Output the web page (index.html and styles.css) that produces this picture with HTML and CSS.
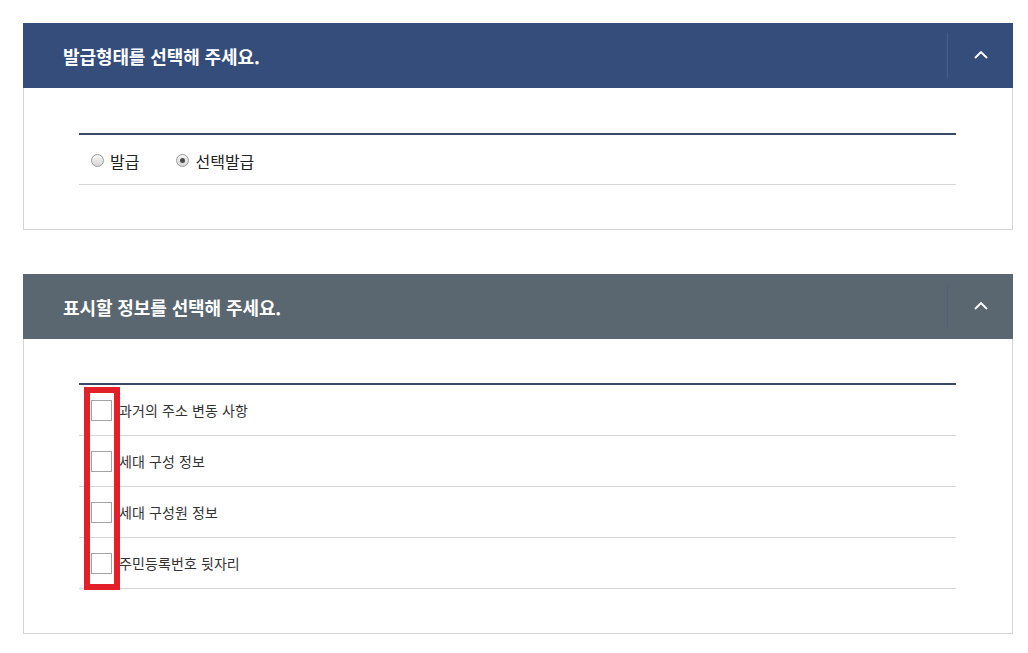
FILE: index.html
```html
<!DOCTYPE html>
<html lang="ko">
<head>
<meta charset="utf-8">
<title>발급형태 선택</title>
<link rel="stylesheet" href="styles.css">
</head>
<body>
<div class="wrap">
  <section class="panel">
    <div class="panel-head head-blue">
      <h2 class="panel-title">발급형태를 선택해 주세요.</h2>
      <button class="toggle" type="button" aria-label="접기">
        <svg width="14" height="8" viewBox="0 0 14 8"><polyline points="1,7 7,1 13,7" fill="none" stroke="#fff" stroke-width="1.8"/></svg>
      </button>
    </div>
    <div class="panel-body">
      <div class="list">
        <div class="row radio-row">
          <label class="opt"><span class="radio"></span><span class="opt-text">발급</span></label>
          <label class="opt"><span class="radio checked"></span><span class="opt-text">선택발급</span></label>
        </div>
      </div>
    </div>
  </section>

  <section class="panel panel-second">
    <div class="panel-head head-slate">
      <h2 class="panel-title">표시할 정보를 선택해 주세요.</h2>
      <button class="toggle" type="button" aria-label="접기">
        <svg width="14" height="8" viewBox="0 0 14 8"><polyline points="1,7 7,1 13,7" fill="none" stroke="#fff" stroke-width="1.8"/></svg>
      </button>
    </div>
    <div class="panel-body">
      <div class="list list-check">
        <label class="row check-row"><span class="check"></span><span class="check-text">과거의 주소 변동 사항</span></label>
        <label class="row check-row"><span class="check"></span><span class="check-text">세대 구성 정보</span></label>
        <label class="row check-row"><span class="check"></span><span class="check-text">세대 구성원 정보</span></label>
        <label class="row check-row"><span class="check"></span><span class="check-text">주민등록번호 뒷자리</span></label>
        <div class="highlight"></div>
      </div>
    </div>
  </section>
</div>
</body>
</html>
```

FILE: styles.css
```css
* { box-sizing: border-box; }

html, body {
  margin: 0;
  padding: 0;
  background: #fff;
}

body {
  font-family: "Noto Sans CJK KR", "Noto Sans", "Liberation Sans", sans-serif;
  color: #222;
}

.wrap {
  width: 990px;
  margin: 23px 0 0 23px;
}

.panel {
  border: 1px solid #d4d4d4;
  border-top: 0;
}

.panel-second {
  margin-top: 44px;
}

.panel-head {
  height: 65px;
  margin: 0 -1px;
  display: flex;
  align-items: stretch;
}

.head-blue { background: #344d7a; }
.head-slate { background: #5a6770; }

.panel-title {
  flex: 1;
  margin: 0;
  padding-left: 40px;
  display: flex;
  align-items: center;
  font-size: 18px;
  font-weight: 700;
  letter-spacing: -0.1px;
  color: #fff;
}

.toggle {
  width: 66px;
  margin: 10px 0;
  padding: 0 0 2px 0;
  border: 0;
  border-left: 1px solid #4b5d86;
  background: transparent;
  display: flex;
  align-items: center;
  justify-content: center;
  cursor: pointer;
}

.head-slate .toggle { border-left-color: #515f78; }

.panel-body {
  padding: 45px 56px 44px 55px;
}

.panel-second .panel-body {
  padding-top: 44px;
}

.list {
  border-top: 2px solid #3a4865;
  position: relative;
}

.row {
  display: flex;
  align-items: center;
  border-bottom: 1px solid #d6d6d6;
  padding-left: 12px;
}

.radio-row {
  height: 50px;
  padding-top: 2px;
}

.opt {
  display: inline-flex;
  align-items: center;
  margin-right: 37px;
  font-size: 16px;
  color: #222;
}

.radio {
  width: 13px;
  height: 13px;
  border-radius: 50%;
  border: 1px solid #9c9c9c;
  background: linear-gradient(#f6f6f6, #d6d6d6);
  margin-right: 6px;
  position: relative;
}

.radio.checked::after {
  content: "";
  position: absolute;
  left: 3px;
  top: 3px;
  width: 5px;
  height: 5px;
  border-radius: 50%;
  background: #4a4a4a;
}

.check-row {
  height: 51px;
}

.check {
  width: 21px;
  height: 21px;
  border: 1px solid #a3a3a3;
  background: #fff;
  margin-right: 7px;
  flex: none;
}

.check-text {
  font-size: 14px;
  letter-spacing: 0.1px;
  color: #333;
}

.highlight {
  position: absolute;
  left: 5px;
  top: 2px;
  width: 36px;
  height: 203px;
  border: 6px solid #e3202a;
  pointer-events: none;
}
```
